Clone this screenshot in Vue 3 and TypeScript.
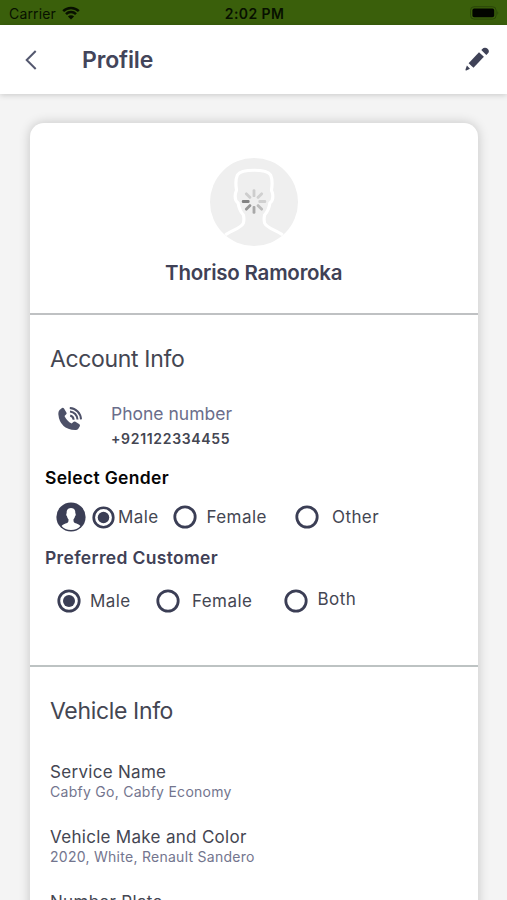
<script setup lang="ts">
import { ref } from 'vue'

interface Choice {
  key: string
  label: string
}

const genders: Choice[] = [
  { key: 'male', label: 'Male' },
  { key: 'female', label: 'Female' },
  { key: 'other', label: 'Other' },
]
const customers: Choice[] = [
  { key: 'male', label: 'Male' },
  { key: 'female', label: 'Female' },
  { key: 'both', label: 'Both' },
]
const gender = ref('male')
const customer = ref('male')

const vehicle = [
  { key: 'service', label: 'Service Name', value: 'Cabfy Go, Cabfy Economy' },
  { key: 'make', label: 'Vehicle Make and Color', value: '2020, White, Renault Sandero' },
  { key: 'plate', label: 'Number Plate', value: '' },
]

const spokes = [0.2, 0.18, 0.18, 0.3, 0.42, 0.52, 0.64, 0.2].map((opacity, i) => ({
  opacity,
  turn: `rotate(${i * 45} 44 43.5)`,
}))
</script>

<template>
  <div class="screen">
    <div class="status">
      <div class="carrier">
        <span class="carrier-name">Carrier</span>
        <svg class="wifi" viewBox="0 0 18 14">
          <path d="M1.2 5.2a11 11 0 0 1 15.6 0" />
          <path d="M4 8.2a7 7 0 0 1 10 0" />
          <path class="fill" d="M9 13.6 5.9 10.5a4.4 4.4 0 0 1 6.2 0z" />
        </svg>
      </div>
      <span class="time">2:02 PM</span>
      <svg class="battery" viewBox="0 0 30 14">
        <rect x="0.5" y="0.7" width="25.6" height="12.4" rx="3.6" class="shell" />
        <rect x="2.4" y="2.6" width="21.8" height="8.6" rx="1.8" />
        <path d="M27.4 4.8q1.8 2.1 0 4.2z" class="tip" />
      </svg>
    </div>

    <header class="bar">
      <svg class="back" viewBox="0 0 12 20"><path d="M10.7 1 1.7 10l9 9" /></svg>
      <h1 class="title">Profile</h1>
      <svg class="pencil" viewBox="0 0 24 24">
        <path d="M3.600 16.200 14 5.200l4.900 4.500L8.500 20.700z" />
        <path d="m16.300 3 1-1a3.600 3.600 0 0 1 5.300-.3 3.500 3.500 0 0 1 .2 4.900l-1.500 1.300z" />
        <path d="M1.900 18.500 5 21.800l-3.700 1.600q-1 .2-.8-.9z" />
      </svg>
    </header>

    <main class="card">
      <section class="person">
        <svg class="avatar" viewBox="0 0 88 88">
          <circle cx="44" cy="44" r="44" fill="#efefef" />
          <path
            class="outline"
            transform="translate(-2.640 0) scale(1.060 1)"
            d="M17 77c5-4.500 15-6.500 17-12 .7-2.500.6-5 0-8-2.600-3-4.300-7-5-12-2.500-2-3.300-6-2.300-10.500.3-1 .8-1.500.8-2.500-.8-5-.8-11 .8-15C30.500 13.500 36 12.300 44 12.300s13.500 1.200 15.700 4.700c1.600 4 1.600 10 .8 15 0 1 .5 1.500.8 2.500 1 4.500.2 8.500-2.300 10.500-.7 5-2.400 9-5 12-.6 3-.7 5.500 0 8 2 5.500 12 7.500 17 12"
          />
          <rect
            v-for="s in spokes"
            :key="s.turn"
            x="42.600"
            y="31.300"
            width="2.800"
            height="7.800"
            rx="1.200"
            fill="#444"
            :fill-opacity="s.opacity"
            :transform="s.turn"
          />
        </svg>
        <h2 class="name">Thoriso Ramoroka</h2>
      </section>

      <section class="account">
        <h3 class="heading">Account Info</h3>
        <div class="phone">
          <svg class="phone-icon" viewBox="0 0 24 24">
            <path
              class="handset"
              d="M1.500 2.900 4 .9q1.200-.6 2 .5l2.400 4q.7 1.300-.4 2.200L6.500 8.900q2.200 5 7.200 7.700l1.600-1.700q1-.9 2.200-.2l3.900 2.500q1 .8.400 2l-1.500 2.600q-.9 1.400-3 1.300Q1.700 22.200.3 7q-.1-2.800 1.200-4.100z"
            />
            <path class="wave" d="M12.200 8.500a4.600 4.600 0 0 1 3.400 4.200M12 4.600c4.300.6 7 3.700 7.500 7.900M11.800 1c6.300.4 10.900 5.200 11.200 11.400" />
          </svg>
          <div>
            <div class="phone-label">Phone number</div>
            <div class="phone-value">+921122334455</div>
          </div>
        </div>

        <h4 class="sub gender-title">Select Gender</h4>
        <div class="choices gender">
          <svg class="user" viewBox="0 0 30 30">
            <circle cx="15" cy="15" r="14.600" />
            <path
              d="M15 6c3.200 0 4.500 2.200 4.300 5.200.8.400.5 2.500-.3 3.100-.3 1.500-.8 2.300-1.500 3 0 1.800-.1 2.900 1.300 3.600 2.300.9 4.600 1.400 5.600 3.100C22.300 26.500 19 27.900 15 27.900s-7.300-1.400-9.400-3.900c1-1.700 3.300-2.200 5.600-3.100 1.400-.7 1.300-1.800 1.300-3.600-.7-.7-1.200-1.500-1.500-3-.8-.6-1.100-2.700-.3-3.100C10.500 8.200 11.800 6 15 6z"
              fill="#fff"
            />
          </svg>
          <div
            v-for="g in genders"
            :key="g.key"
            class="choice"
            :class="g.key"
            role="radio"
            :aria-checked="gender === g.key"
            @click="gender = g.key"
          >
            <svg class="radio" viewBox="0 0 24 24">
              <circle class="ring" cx="12" cy="12" r="10.200" />
              <circle v-if="gender === g.key" cx="12" cy="12" r="6" />
            </svg>
            <span class="choice-label">{{ g.label }}</span>
          </div>
        </div>

        <h4 class="sub">Preferred Customer</h4>
        <div class="choices customer">
          <div
            v-for="c in customers"
            :key="c.key"
            class="choice"
            :class="c.key"
            role="radio"
            :aria-checked="customer === c.key"
            @click="customer = c.key"
          >
            <svg class="radio" viewBox="0 0 24 24">
              <circle class="ring" cx="12" cy="12" r="10.200" />
              <circle v-if="customer === c.key" cx="12" cy="12" r="6" />
            </svg>
            <span class="choice-label">{{ c.label }}</span>
          </div>
        </div>
      </section>

      <section class="vehicle">
        <h3 class="heading">Vehicle Info</h3>
        <div v-for="v in vehicle" :key="v.key" class="fact" :class="v.key">
          <div class="fact-label">{{ v.label }}</div>
          <div class="fact-value">{{ v.value }}</div>
        </div>
      </section>
    </main>
  </div>
</template>

<style>
body {
  margin: 0;
  overflow: hidden;
}
</style>

<style scoped>
.screen {
  display: flex;
  flex-direction: column;
  height: 900px;
  overflow: hidden;
  background: #f4f4f4;
  color: #444652;
  font-family: Inter, 'Liberation Sans', sans-serif;
}
svg {
  display: block;
  flex: none;
}
h1,
h2,
h3,
h4 {
  margin: 0;
}
div,
span,
h1,
h2,
h3,
h4 {
  white-space: nowrap;
}
.status {
  flex: none;
  display: grid;
  grid-template-columns: 1fr auto 1fr;
  align-items: center;
  box-sizing: border-box;
  height: 25px;
  padding: 2px 7px 0 9px;
  background: #3a5f0b;
  color: #071000;
  line-height: 22px;
}
.carrier {
  display: flex;
  align-items: center;
  gap: 6px;
}
.carrier-name {
  font-size: 14px;
  letter-spacing: 0.15px;
}
.wifi {
  width: 18px;
  height: 14px;
  margin-top: -2px;
  fill: none;
  stroke: #071000;
  stroke-width: 2.5;
}
.wifi .fill {
  fill: #071000;
  stroke: none;
}
.time {
  font-size: 14px;
  font-weight: 600;
  letter-spacing: 0.4px;
}
.battery {
  justify-self: end;
  width: 30px;
  height: 14px;
  margin-top: -1px;
  fill: #020400;
}
.battery .shell {
  fill: none;
  stroke: #2a4609;
}
.battery .tip {
  fill: #2a4609;
}
.bar {
  flex: none;
  display: flex;
  align-items: center;
  box-sizing: border-box;
  height: 69px;
  padding: 0 18px 0 25px;
  background: #fff;
  box-shadow: 0 1px 6px rgba(0, 0, 0, 0.18);
}
.back {
  width: 12px;
  height: 20px;
  fill: none;
  stroke: #54586f;
  stroke-width: 2;
}
.title {
  flex: 1;
  margin-left: 45px;
  color: #43455a;
  font-size: 23px;
  font-weight: 600;
  line-height: 30px;
  letter-spacing: -0.15px;
}
.pencil {
  width: 24px;
  height: 24px;
  margin-top: -1px;
  fill: #3f4257;
}
.card {
  flex: none;
  width: 447.500px;
  height: 900px;
  margin: 29px 0 0 30px;
  border-radius: 14px;
  background: #fff;
  box-shadow: 0 0 12px rgba(0, 0, 0, 0.2);
}
.person {
  display: flex;
  flex-direction: column;
  align-items: center;
  box-sizing: border-box;
  height: 192px;
  padding-top: 35px;
  border-bottom: 2px solid #bfc1c3;
}
.avatar {
  width: 88px;
  height: 88px;
}
.avatar .outline {
  fill: none;
  stroke: #fff;
  stroke-width: 3;
}
.name {
  margin-top: 12px;
  color: #3f4156;
  font-size: 20.500px;
  font-weight: 600;
  line-height: 30px;
  letter-spacing: -0.22px;
}
.account {
  box-sizing: border-box;
  height: 352px;
  padding: 29px 0 0 15px;
  border-bottom: 2px solid #bdc3c3;
}
.heading {
  margin-left: 5px;
  font-size: 23px;
  font-weight: 400;
  line-height: 30px;
  letter-spacing: -0.35px;
}
.phone {
  display: flex;
  gap: 29px;
  margin: 27px 0 0 13px;
}
.phone-icon {
  width: 24px;
  height: 24px;
  margin-top: 6px;
  fill: #4d5168;
}
.phone-icon .wave {
  fill: none;
  stroke: #4d5168;
  stroke-width: 2;
}
.phone-label {
  color: #6b6e8b;
  font-size: 17.500px;
  line-height: 26px;
}
.phone-value {
  font-size: 14px;
  font-weight: 600;
  line-height: 24px;
  letter-spacing: 0.68px;
}
.sub {
  color: #3f4156;
  font-size: 17.500px;
  font-weight: 600;
  line-height: 24px;
  letter-spacing: 0.32px;
}
.gender-title {
  margin-top: 15px;
  color: #050505;
}
.choices {
  display: flex;
  align-items: center;
  height: 30px;
}
.gender {
  margin: 12px 0 14px 10.500px;
}
.customer {
  margin: 15.500px 0 0 11.500px;
}
.user {
  width: 30px;
  height: 30px;
  fill: #3b3e55;
}
.choice {
  display: flex;
  align-items: center;
}
.radio {
  width: 24px;
  height: 24px;
  fill: #3b3e55;
}
.ring {
  fill: none;
  stroke: #3b3e55;
  stroke-width: 2.800;
}
.choice-label {
  margin-left: 9.500px;
  font-size: 17px;
  line-height: 24px;
  letter-spacing: 0.42px;
}
.gender .male {
  width: 81px;
  margin-left: 6.500px;
}
.gender .male .radio {
  width: 23px;
  height: 23px;
}
.gender .male .choice-label {
  margin: -1px 0 0 3px;
}
.gender .female {
  width: 122px;
}
.gender .other .choice-label {
  margin-left: 13px;
}
.customer .male {
  width: 99.500px;
}
.customer .female {
  width: 128px;
}
.customer .female .choice-label {
  margin-left: 12px;
}
.customer .both .choice-label {
  margin: -3px 0 0 9.500px;
}
.vehicle {
  padding: 29px 0 0 15px;
}
.fact {
  margin-left: 5px;
  padding-top: 23px;
}
.fact.service {
  padding-top: 35px;
}
.fact-label {
  font-size: 17px;
  line-height: 22px;
  letter-spacing: 0.3px;
}
.fact-value {
  min-height: 20px;
  color: #73758e;
  font-size: 14px;
  line-height: 18px;
  letter-spacing: 0.27px;
}
</style>
